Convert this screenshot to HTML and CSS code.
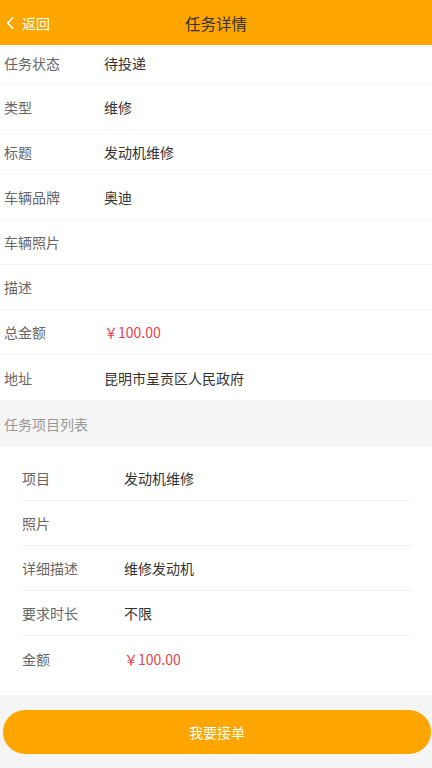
FILE: index.html
```html
<!DOCTYPE html>
<html lang="zh">
<head>
<meta charset="utf-8">
<link rel="stylesheet" href="styles.css">
</head>
<body>
<div class="page">
  <header class="topbar">
    <div class="back">
      <svg class="chev" width="8" height="12" viewBox="0 0 8 12"><path d="M6.5 1 L1.8 6 L6.5 11" fill="none" stroke="#fff" stroke-width="1.8" stroke-linecap="round" stroke-linejoin="round"/></svg>
      <span>返回</span>
    </div>
    <div class="title">任务详情</div>
  </header>

  <div class="info">
    <div class="row first"><span class="label">任务状态</span><span class="value">待投递</span></div>
    <div class="row"><span class="label">类型</span><span class="value">维修</span></div>
    <div class="row"><span class="label">标题</span><span class="value">发动机维修</span></div>
    <div class="row"><span class="label">车辆品牌</span><span class="value">奥迪</span></div>
    <div class="row"><span class="label">车辆照片</span><span class="value"></span></div>
    <div class="row"><span class="label">描述</span><span class="value"></span></div>
    <div class="row"><span class="label">总金额</span><span class="value price">￥100.00</span></div>
    <div class="row"><span class="label">地址</span><span class="value">昆明市呈贡区人民政府</span></div>
  </div>

  <div class="section">任务项目列表</div>

  <div class="card">
    <div class="crow"><span class="clabel">项目</span><span class="value">发动机维修</span></div>
    <div class="crow"><span class="clabel">照片</span><span class="value"></span></div>
    <div class="crow"><span class="clabel">详细描述</span><span class="value">维修发动机</span></div>
    <div class="crow"><span class="clabel">要求时长</span><span class="value">不限</span></div>
    <div class="crow"><span class="clabel">金额</span><span class="value price">￥100.00</span></div>
  </div>

  <div class="footer">
    <button class="accept">我要接单</button>
  </div>
</div>
</body>
</html>
```

FILE: styles.css
```css
* { box-sizing: border-box; }
html, body {
  margin: 0;
  padding: 0;
  background: #f5f5f5;
  font-family: "Noto Sans CJK SC", "Noto Sans", sans-serif;
}
.page {
  width: 432px;
  min-height: 768px;
  background: #f5f5f5;
}
.topbar {
  height: 45px;
  background: #ffa500;
  display: flex;
  align-items: center;
  position: relative;
}
.back {
  display: flex;
  align-items: center;
  padding-left: 6px;
  color: #fff;
  font-size: 14px;
  gap: 8px;
}
.chev { display: block; }
.title {
  position: absolute;
  left: 0;
  right: 0;
  text-align: center;
  font-size: 15.5px;
  color: #333;
  pointer-events: none;
}
.info { background: #fff; }
.row {
  height: 45px;
  display: flex;
  align-items: center;
  padding-left: 4px;
  border-bottom: 1px solid #f4f4f4;
  font-size: 14px;
}
.row.first { height: 40px; padding-bottom: 4px; }
.row:last-child { border-bottom: none; }
.label {
  width: 100px;
  color: #666;
}
.value { color: #333; }
.price { color: #e8414b; }
.section {
  height: 47px;
  display: flex;
  align-items: center;
  padding-left: 4px;
  font-size: 14px;
  color: #999;
  background: #f5f5f5;
}
.card {
  background: #fff;
  padding: 9px 20px 14px 22px;
}
.crow {
  height: 45px;
  display: flex;
  align-items: center;
  border-bottom: 1px solid #f2f2f2;
  font-size: 14px;
}
.crow:last-child { border-bottom: none; }
.clabel {
  width: 102px;
  color: #666;
}
.footer {
  padding: 15px 1px 14px 3px;
}
.accept {
  display: block;
  width: 100%;
  height: 44px;
  border: none;
  border-radius: 22px;
  background: #ffa500;
  color: #fff;
  font-family: "Noto Sans CJK SC", "Noto Sans", sans-serif;
  font-size: 14px;
}
```
